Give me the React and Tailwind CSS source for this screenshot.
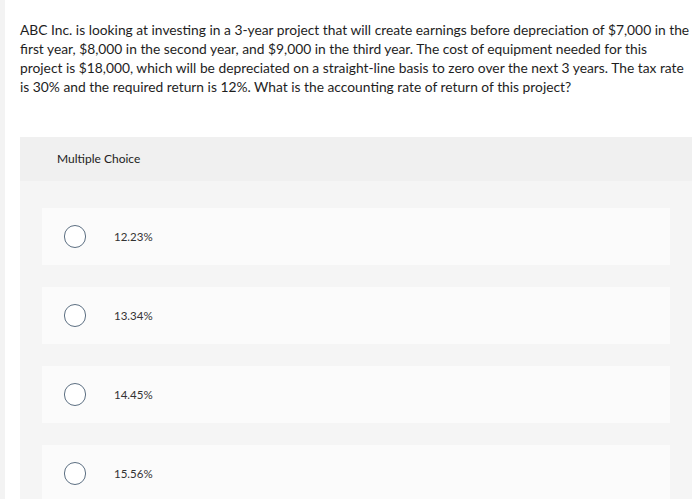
import React from 'react';

const choices = ['12.23%', '13.34%', '14.45%', '15.56%'];

const lines = [
  'ABC Inc. is looking at investing in a 3-year project that will create earnings before depreciation of $7,000 in the',
  'first year, $8,000 in the second year, and $9,000 in the third year. The cost of equipment needed for this',
  'project is $18,000, which will be depreciated on a straight-line basis to zero over the next 3 years. The tax rate',
  'is 30% and the required return is 12%. What is the accounting rate of return of this project?',
];

export default function App() {
  return (
    <div className="flex h-[499px] w-[700px] overflow-hidden bg-white font-['Lato',sans-serif]">
      <div className="w-[5px] shrink-0 bg-[#f3f3f3]" />
      <div className="flex-1 pl-[15px] pr-[8px]">
        <div className="pt-[20px] text-[13.8px] leading-[19px] text-[#1e1e1e]">
          {lines.map((l) => (
            <p key={l} className="whitespace-nowrap">{l}</p>
          ))}
        </div>

        <div className="mt-[41px] bg-[#f5f5f5]">
          <div className="flex h-[44px] items-center bg-[#f0f0f0] pl-[37px] text-[12px] text-[#222]">
            Multiple Choice
          </div>
          <div className="flex flex-col gap-[22px] px-[22px] pt-[27px] pb-[20px]">
            {choices.map((c) => (
              <div key={c} className="flex h-[57px] items-center bg-[#fbfbfb] pl-[22px]">
                <span className="h-[23px] w-[22px] rounded-full border border-[#5c6f82] bg-white" />
                <span className="ml-[28px] text-[11.5px] text-[#333]">{c}</span>
              </div>
            ))}
          </div>
        </div>
      </div>
    </div>
  );
}
